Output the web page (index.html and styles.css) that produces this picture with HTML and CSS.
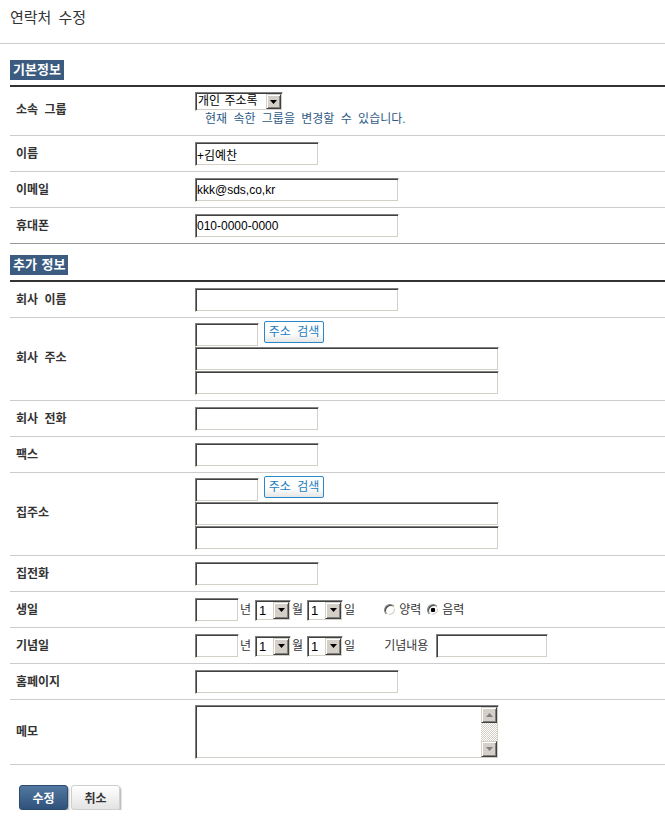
FILE: index.html
```html
<!DOCTYPE html>
<html lang="ko">
<head>
<meta charset="utf-8">
<title>연락처 수정</title>
<link rel="stylesheet" href="styles.css">
</head>
<body>
<div class="header"><h1 class="title">연락처 수정</h1></div>
<div class="content">
  <section class="section">
    <h2 class="badge">기본정보</h2>
    <div class="table table-basic">
      <div class="row row-group">
        <div class="label">소속 그룹</div>
        <div class="field">
          <div class="select select-group"><span class="select-text">개인 주소록</span><span class="select-btn"><svg width="7" height="4" viewBox="0 0 7 4"><polygon points="0,0 7,0 3.5,4" fill="#000"/></svg></span></div>
          <p class="help">현재 속한 그룹을 변경할 수 있습니다.</p>
        </div>
      </div>
      <div class="row">
        <div class="label">이름</div>
        <div class="field"><input class="input w-s" type="text" value="+김예찬"></div>
      </div>
      <div class="row">
        <div class="label">이메일</div>
        <div class="field"><input class="input w-m" type="text" value="kkk@sds,co,kr"></div>
      </div>
      <div class="row row-last">
        <div class="label">휴대폰</div>
        <div class="field"><input class="input w-m" type="text" value="010-0000-0000"></div>
      </div>
    </div>
  </section>

  <section class="section section-extra">
    <h2 class="badge">추가 정보</h2>
    <div class="table">
      <div class="row">
        <div class="label">회사 이름</div>
        <div class="field"><input class="input w-m" type="text"></div>
      </div>
      <div class="row row-addr">
        <div class="label">회사 주소</div>
        <div class="field">
          <div class="zip-line"><input class="input w-zip" type="text"><button class="btn-addr" type="button">주소 검색</button></div>
          <input class="input w-l" type="text">
          <input class="input w-l" type="text">
        </div>
      </div>
      <div class="row">
        <div class="label">회사 전화</div>
        <div class="field"><input class="input w-s" type="text"></div>
      </div>
      <div class="row">
        <div class="label">팩스</div>
        <div class="field"><input class="input w-s" type="text"></div>
      </div>
      <div class="row row-addr">
        <div class="label">집주소</div>
        <div class="field">
          <div class="zip-line"><input class="input w-zip" type="text"><button class="btn-addr" type="button">주소 검색</button></div>
          <input class="input w-l" type="text">
          <input class="input w-l" type="text">
        </div>
      </div>
      <div class="row">
        <div class="label">집전화</div>
        <div class="field"><input class="input w-s" type="text"></div>
      </div>
      <div class="row">
        <div class="label">생일</div>
        <div class="field field-line">
          <input class="input w-year" type="text"><span class="unit">년</span>
          <div class="select select-date"><span class="select-text">1</span><span class="select-btn"><svg width="7" height="4" viewBox="0 0 7 4"><polygon points="0,0 7,0 3.5,4" fill="#000"/></svg></span></div><span class="unit">월</span>
          <div class="select select-date"><span class="select-text">1</span><span class="select-btn"><svg width="7" height="4" viewBox="0 0 7 4"><polygon points="0,0 7,0 3.5,4" fill="#000"/></svg></span></div><span class="unit">일</span>
          <span class="radio-group">
            <input class="radio" type="radio" name="cal"><span class="radio-text">양력</span>
            <input class="radio" type="radio" name="cal" checked><span class="radio-text">음력</span>
          </span>
        </div>
      </div>
      <div class="row">
        <div class="label">기념일</div>
        <div class="field field-line">
          <input class="input w-year" type="text"><span class="unit">년</span>
          <div class="select select-date"><span class="select-text">1</span><span class="select-btn"><svg width="7" height="4" viewBox="0 0 7 4"><polygon points="0,0 7,0 3.5,4" fill="#000"/></svg></span></div><span class="unit">월</span>
          <div class="select select-date"><span class="select-text">1</span><span class="select-btn"><svg width="7" height="4" viewBox="0 0 7 4"><polygon points="0,0 7,0 3.5,4" fill="#000"/></svg></span></div><span class="unit">일</span>
          <span class="memo-label">기념내용</span><input class="input w-note" type="text">
        </div>
      </div>
      <div class="row">
        <div class="label">홈페이지</div>
        <div class="field"><input class="input w-m" type="text"></div>
      </div>
      <div class="row row-memo">
        <div class="label">메모</div>
        <div class="field">
          <div class="memo">
            <textarea class="memo-text"></textarea>
            <div class="scrollbar">
              <span class="sb-btn"><svg width="7" height="4" viewBox="0 0 7 4"><polygon points="0,4 7,4 3.5,0" fill="#808080"/></svg></span>
              <span class="sb-track"></span>
              <span class="sb-btn"><svg width="7" height="4" viewBox="0 0 7 4"><polygon points="0,0 7,0 3.5,4" fill="#808080"/></svg></span>
            </div>
          </div>
        </div>
      </div>
    </div>
  </section>

  <div class="actions">
    <button class="btn btn-primary" type="button">수정</button>
    <button class="btn btn-default" type="button">취소</button>
  </div>
</div>
</body>
</html>
```
FILE: styles.css
```css
* { box-sizing: border-box; }

body {
  margin: 0;
  background: #fff;
  color: #333;
  font-family: "Liberation Sans", "Noto Sans CJK KR", sans-serif;
  font-size: 12px;
  word-spacing: 3px;
}

.header {
  height: 44px;
  border-bottom: 1px solid #cccccc;
}

.title {
  margin: 0;
  padding: 8px 0 0 10px;
  font-size: 15px;
  font-weight: normal;
  line-height: 20px;
  color: #333;
}

.content {
  padding-left: 10px;
}

.badge {
  width: fit-content;
  margin: 16px 0 0;
  padding: 0 3px;
  height: 20px;
  line-height: 20px;
  background: #3b5b80;
  color: #fff;
  font-size: 13px;
  font-weight: bold;
  word-spacing: 1px;
}

.section-extra .badge {
  margin-top: 11px;
}

.table {
  margin-top: 5px;
  border-top: 2px solid #333;
}

.row {
  display: grid;
  grid-template-columns: 185px 1fr;
  align-items: center;
  padding: 6px 0 5px;
  border-bottom: 1px solid #cccccc;
}

.row-last {
  border-bottom-color: #999999;
}

.row-group {
  padding: 5px 0 8px;
}

.row-addr {
  padding: 3px 0 5px;
}

.row-memo {
  padding: 5px 0 5px;
}

.label {
  padding-left: 6px;
  font-weight: bold;
  line-height: 16px;
  color: #333;
}

.field {
  display: flex;
  flex-direction: column;
  align-items: flex-start;
}

.field-line {
  flex-direction: row;
  align-items: center;
}

.input {
  display: block;
  height: 24px;
  margin: 0;
  padding: 0 1px;
  border: 1px solid;
  border-color: #808080 #ffffff #ffffff #808080;
  box-shadow: inset 1px 1px 0 #404040, inset -1px -1px 0 #d4d0c8;
  background: #fff;
  color: #000;
  font-family: "Liberation Sans", "Noto Sans CJK KR", sans-serif;
  font-size: 12px;
  outline: none;
}

.w-s { width: 124px; }
.w-m { width: 204px; }
.w-l { width: 304px; }
.w-zip { width: 64px; }
.w-year { width: 44px; }
.w-note { width: 112px; }

.help {
  margin: 0;
  padding-left: 10px;
  line-height: 16px;
  color: #2e5b86;
}

.select {
  display: flex;
  padding: 1px;
  border: 1px solid;
  border-color: #808080 #ffffff #ffffff #808080;
  box-shadow: inset 1px 1px 0 #404040, inset -1px -1px 0 #d4d0c8;
  background: #fff;
  color: #000;
}

.select-group {
  width: 88px;
  height: 19px;
}

.select-date {
  width: 36px;
  height: 21px;
}

.select-text {
  flex: 1;
  padding-left: 1px;
  line-height: 15px;
  white-space: nowrap;
  overflow: hidden;
  word-spacing: 1px;
}

.select-date .select-text {
  padding-left: 2px;
  line-height: 17px;
  font-size: 13px;
}

.select-btn {
  display: flex;
  align-items: center;
  justify-content: center;
  width: 15px;
  background: #d4d0c8;
  border: 1px solid;
  border-color: #d4d0c8 #404040 #404040 #d4d0c8;
  box-shadow: inset 1px 1px 0 #fff, inset -1px -1px 0 #808080;
}

.select-date .select-btn {
  width: 16px;
}

.unit {
  margin: 0 4px 0 1px;
  line-height: 16px;
}

.radio-group {
  display: flex;
  align-items: center;
  margin-left: 25px;
}

.radio {
  appearance: none;
  -webkit-appearance: none;
  width: 12px;
  height: 12px;
  margin: 0 3px 0 0;
  border-radius: 50%;
  border: 1px solid;
  border-color: #808080 #ffffff #ffffff #808080;
  box-shadow: inset 1px 1px 0 #404040, inset -1px -1px 0 #d4d0c8;
  background: #fff;
}

.radio:checked {
  background: radial-gradient(circle, #000 0 2px, #fff 2.6px);
}

.radio-text {
  margin-right: 6px;
  line-height: 16px;
}

.memo-label {
  margin: 0 8px 0 25px;
  line-height: 16px;
}

.zip-line {
  display: flex;
  align-items: flex-start;
  gap: 5px;
}

.zip-line .input {
  margin-top: 2px;
}

.btn-addr {
  width: 60px;
  height: 22px;
  padding: 0;
  border: 1px solid #2b88c8;
  border-radius: 2px;
  background: linear-gradient(#ffffff 55%, #e6e6e6);
  color: #1a7bbf;
  font-family: "Liberation Sans", "Noto Sans CJK KR", sans-serif;
  font-size: 12px;
  line-height: 20px;
  word-spacing: 3px;
}

.memo {
  display: flex;
  width: 304px;
  height: 54px;
  padding: 1px;
  border: 1px solid;
  border-color: #808080 #ffffff #ffffff #808080;
  box-shadow: inset 1px 1px 0 #404040, inset -1px -1px 0 #d4d0c8;
  background: #fff;
}

.memo-text {
  flex: 1;
  margin: 0;
  padding: 1px;
  border: 0;
  resize: none;
  outline: none;
  overflow: hidden;
  background: transparent;
  font-family: "Liberation Sans", "Noto Sans CJK KR", sans-serif;
  font-size: 12px;
}

.scrollbar {
  display: flex;
  flex-direction: column;
  width: 16px;
}

.sb-btn {
  display: flex;
  align-items: center;
  justify-content: center;
  height: 16px;
  background: #d4d0c8;
  border: 1px solid;
  border-color: #d4d0c8 #404040 #404040 #d4d0c8;
  box-shadow: inset 1px 1px 0 #fff, inset -1px -1px 0 #808080;
}

.sb-track {
  flex: 1;
  background-image: conic-gradient(#d4d0c8 25%, #ffffff 0 50%, #d4d0c8 0 75%, #ffffff 0);
  background-size: 2px 2px;
}

.actions {
  display: flex;
  gap: 3px;
  padding: 20px 0 0 9px;
}

.btn {
  width: 49px;
  height: 25px;
  padding: 0;
  border-radius: 3px;
  font-family: "Liberation Sans", "Noto Sans CJK KR", sans-serif;
  font-size: 12px;
  font-weight: bold;
  box-shadow: 1px 2px 2px rgba(0, 0, 0, 0.35);
}

.btn-primary {
  background: linear-gradient(#52789f, #2f527b);
  border: 1px solid #2c4b70;
  color: #fff;
}

.btn-default {
  background: linear-gradient(#ffffff, #e3e3e3);
  border: 1px solid #cfcfcf;
  color: #333;
}
```
